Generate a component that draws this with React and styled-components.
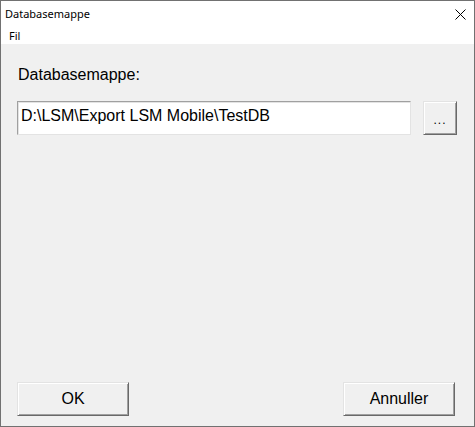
import React from 'react';
import styled, { createGlobalStyle } from 'styled-components';

const GlobalStyle = createGlobalStyle`
	html, body {
		margin: 0;
		padding: 0;
		background: #ffffff;
	}
	* {
		box-sizing: border-box;
	}
`;

const Window = styled.div`
	width: 475px;
	height: 427px;
	border: 1px solid #717171;
	display: flex;
	flex-direction: column;
	background: #f0f0f0;
	font-family: 'Liberation Sans', Arial, sans-serif;
	color: #000;
`;

const TitleBar = styled.div`
	height: 27px;
	background: #fff;
	display: flex;
	align-items: center;
	justify-content: space-between;
	padding-left: 4px;
`;

const TitleText = styled.span`
	font-family: 'Noto Sans', 'Open Sans', sans-serif;
	font-size: 11px;
	line-height: 16px;
	margin-top: -1px;
`;

const CloseButton = styled.div`
	width: 46px;
	height: 27px;
	display: flex;
	align-items: center;
	justify-content: center;
	margin-right: -9px;
`;

const MenuBar = styled.div`
	height: 16px;
	background: #fff;
	display: flex;
	align-items: center;
	padding-left: 8px;
`;

const MenuItem = styled.span`
	font-family: 'Noto Sans', 'Open Sans', sans-serif;
	font-size: 11px;
	line-height: 16px;
`;

const Client = styled.div`
	flex: 1;
	display: flex;
	flex-direction: column;
	padding: 22px 17px 10px 16px;
`;

const Label = styled.div`
	font-size: 16px;
	line-height: 18px;
	padding-left: 1px;
`;

const PathRow = styled.div`
	display: flex;
	gap: 12px;
	margin-top: 17px;
	height: 34px;
`;

const PathInput = styled.div`
	flex: 1;
	background: #fff;
	border-top: 1px solid #a0a0a0;
	border-left: 1px solid #a0a0a0;
	border-right: 1px solid #e3e3e3;
	border-bottom: 1px solid #e3e3e3;
	box-shadow: inset 1px 1px 0 #e3e3e3;
	display: flex;
	align-items: center;
	padding: 0 3px 4px;
	font-size: 16px;
	white-space: nowrap;
`;

const ClassicButton = styled.button`
	width: ${p => p.$width}px;
	height: 34px;
	padding: 0;
	background: #f0f0f0;
	border-top: 1px solid #e3e3e3;
	border-left: 1px solid #e3e3e3;
	border-right: 1px solid #696969;
	border-bottom: 1px solid #696969;
	box-shadow: inset 1px 1px 0 #fff, inset -1px -1px 0 #a0a0a0;
	font-family: 'Liberation Sans', Arial, sans-serif;
	font-size: ${p => p.$size || 16}px;
	color: #000;
	display: flex;
	align-items: center;
	justify-content: center;
	cursor: default;
`;

const Dots = styled.span`
	letter-spacing: 1px;
	margin-top: 4px;
`;

const Spacer = styled.div`
	flex: 1;
`;

const Footer = styled.div`
	display: flex;
	justify-content: space-between;
	padding-right: 2px;
`;

const CloseIcon = () => (
	<svg width="11" height="11" viewBox="0 0 11 11">
		<path d="M0.5 0.5 L10.5 10.5 M10.5 0.5 L0.5 10.5" stroke="#000" strokeWidth="1" fill="none" />
	</svg>
);

const App = () => (
	<>
		<GlobalStyle />
		<Window>
			<TitleBar>
				<TitleText>Databasemappe</TitleText>
				<CloseButton>
					<CloseIcon />
				</CloseButton>
			</TitleBar>
			<MenuBar>
				<MenuItem>Fil</MenuItem>
			</MenuBar>
			<Client>
				<Label>Databasemappe:</Label>
				<PathRow>
					<PathInput>D:\LSM\Export LSM Mobile\TestDB</PathInput>
					<ClassicButton $width={34} $size={12}><Dots>...</Dots></ClassicButton>
				</PathRow>
				<Spacer />
				<Footer>
					<ClassicButton $width={112}>OK</ClassicButton>
					<ClassicButton $width={112}>Annuller</ClassicButton>
				</Footer>
			</Client>
		</Window>
	</>
);

export default App;
